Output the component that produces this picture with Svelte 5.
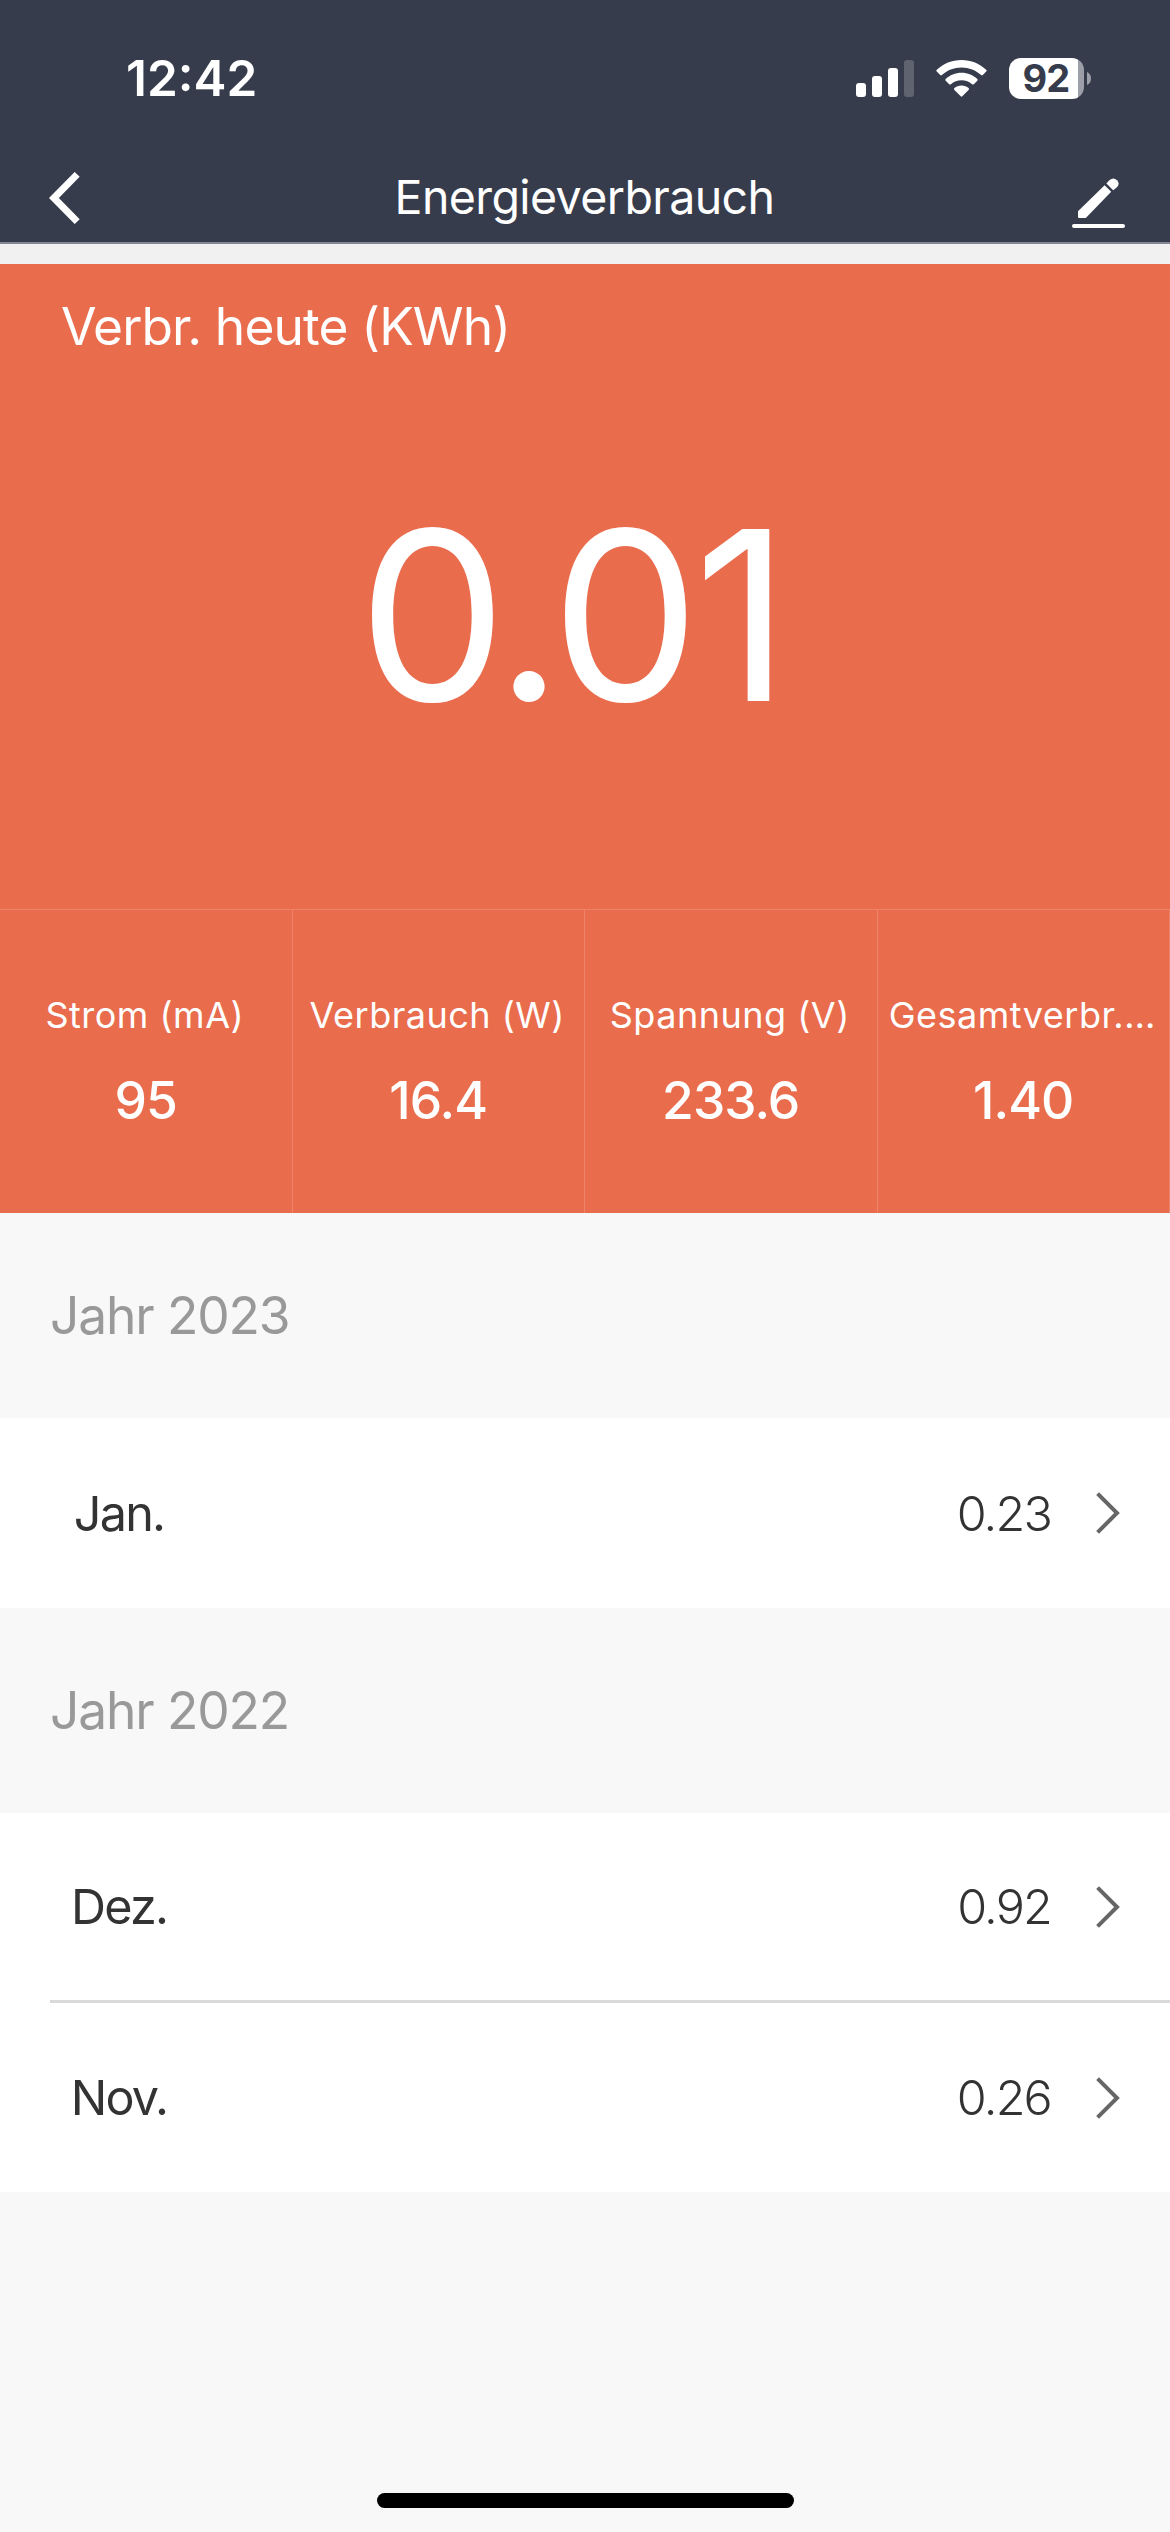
<script lang="ts">
	interface Stat {
		label: string;
		value: string;
	}

	interface Month {
		name: string;
		value: string;
	}

	interface Year {
		title: string;
		months: Month[];
	}

	const today = '0.01';

	const stats: Stat[] = [
		{ label: 'Strom (mA)', value: '95' },
		{ label: 'Verbrauch (W)', value: '16.4' },
		{ label: 'Spannung (V)', value: '233.6' },
		{ label: 'Gesamtverbr.…', value: '1.40' }
	];

	const years: Year[] = [
		{ title: 'Jahr 2023', months: [{ name: 'Jan.', value: '0.23' }] },
		{
			title: 'Jahr 2022',
			months: [
				{ name: 'Dez.', value: '0.92' },
				{ name: 'Nov.', value: '0.26' }
			]
		}
	];
</script>

<div class="screen">
	<header>
		<div class="status-bar">
			<span class="clock">12:42</span>
			<div class="status-icons">
				<svg class="signal" width="58" height="37" viewBox="0 0 58 37" fill="#fff">
					<rect x="0" y="23" width="10" height="14" rx="3" />
					<rect x="16" y="16" width="10" height="21" rx="3" />
					<rect x="32" y="8" width="10" height="29" rx="3" />
					<rect x="48" y="0" width="10" height="37" rx="3" opacity="0.2" />
				</svg>
				<svg class="wifi" width="51" height="37" viewBox="0 0 51 37" fill="#fff">
					<path d="M25.5 0C35 0 43.8 3.7 50.2 9.8Q51.1 10.7 50.2 11.6L46.8 15Q46 15.8 45.1 15C40 10.2 33 7.4 25.5 7.4S11 10.2 5.9 15Q5 15.8 4.2 15L.8 11.6Q-.1 10.7 .8 9.8C7.2 3.7 16 0 25.5 0Z" />
					<path d="M25.5 12.8C31.7 12.8 37.2 15.2 41.3 19Q42.2 19.9 41.3 20.8L37.8 24.2Q37 25 36.1 24.2C33.3 21.7 29.6 20.2 25.5 20.2S17.7 21.7 14.9 24.2Q14 25 13.2 24.2L9.7 20.8Q8.8 19.9 9.7 19C13.8 15.2 19.3 12.8 25.5 12.8Z" />
					<path d="M25.5 25.6C28.3 25.6 30.7 26.5 32.6 28.1Q33.5 29 32.6 29.9L26.3 36.3Q25.5 37 24.7 36.3L18.4 29.9Q17.5 29 18.4 28.1C20.3 26.5 22.7 25.6 25.5 25.6Z" />
				</svg>
				<div class="battery">
					<span class="battery-body">92</span>
					<svg width="4" height="13" viewBox="0 0 4 13">
						<path d="M0 0C2.5 1 4 3.5 4 6.5S2.5 12 0 13Z" fill="#9c9fa7" />
					</svg>
				</div>
			</div>
		</div>
		<nav>
			<button type="button" class="icon-button" aria-label="Zurück">
				<svg width="31" height="52" viewBox="0 0 31 52" fill="none" stroke="#fff" stroke-width="7">
					<path d="M28.2 2.4L4.9 26L28.2 49.6" />
				</svg>
			</button>
			<h1>Energieverbrauch</h1>
			<button type="button" class="icon-button edit" aria-label="Bearbeiten">
				<svg width="53" height="51" viewBox="0 0 53 51" fill="#fff">
					<path d="M6 33.2L32.6 7.2L39.2 13.8L13.8 40H7Q6 40 6 39Z" />
					<path d="M34.4 5.4L37.6 2Q41.6 -1.2 45 2.2Q48.2 5.8 45.2 9L41.2 12.2Z" />
					<rect x="0" y="46" width="53" height="4" rx="2" />
				</svg>
			</button>
		</nav>
	</header>

	<section class="overview">
		<h2>Verbr. heute (KWh)</h2>
		<div class="today">{today}</div>
		<div class="stats">
			{#each stats as stat}
				<div class="stat">
					<span class="stat-label">{stat.label}</span>
					<span class="stat-value">{stat.value}</span>
				</div>
			{/each}
		</div>
	</section>

	<main>
		{#each years as year}
			<h3>{year.title}</h3>
			<ul>
				{#each year.months as month}
					<li>
						<span class="month">{month.name}</span>
						<span class="amount">{month.value}</span>
						<svg width="24" height="42" viewBox="0 0 24 42" fill="none" stroke="#666" stroke-width="4">
							<path d="M1.6 1.6L21 21L1.6 40.4" />
						</svg>
					</li>
				{/each}
			</ul>
		{/each}
	</main>

	<div class="home-indicator"></div>
</div>

<style>
	:global(body) {
		margin: 0;
		background: #f8f8f8;
	}

	.screen {
		display: flex;
		flex-direction: column;
		width: 1170px;
		height: 2532px;
		overflow: hidden;
		background: #f8f8f8;
		color: #333;
		font-family: Inter, 'Liberation Sans', sans-serif;
	}

	h1,
	h2,
	h3,
	ul {
		margin: 0;
		padding: 0;
		font-weight: 400;
		list-style: none;
	}

	header {
		background: #363c4c;
		border-bottom: 2px solid #858693;
		color: #fff;
	}

	.status-bar {
		display: flex;
		align-items: center;
		justify-content: space-between;
		height: 156px;
		padding: 0 79px 0 126px;
		box-sizing: border-box;
	}

	.clock {
		font-size: 49.5px;
		font-weight: 600;
	}

	.status-icons,
	.battery {
		display: flex;
		align-items: center;
	}

	.wifi {
		margin: 0 22px;
	}

	.battery {
		gap: 3px;
	}

	.battery-body {
		width: 75px;
		height: 41px;
		padding-right: 1px;
		box-sizing: border-box;
		border-radius: 12px;
		background: linear-gradient(90deg, #fff 69px, #9c9fa7 69px);
		color: #363c4c;
		font-size: 38px;
		font-weight: 700;
		letter-spacing: -0.8px;
		line-height: 41px;
		text-align: center;
	}

	nav {
		display: flex;
		align-items: center;
		justify-content: space-between;
		height: 82px;
		padding: 0 45px 4px 49px;
	}

	.icon-button {
		display: flex;
		width: 53px;
		padding: 2px 0 0;
		border: none;
		background: transparent;
	}

	.edit {
		padding-top: 12px;
	}

	h1 {
		margin-right: 5px;
		font-size: 46.5px;
		letter-spacing: -0.6px;
	}

	.overview {
		display: flex;
		flex-direction: column;
		height: 949px;
		border-top: 20px solid #f1f1f2;
		background: #e96c4d;
		color: #fff;
	}

	h2 {
		padding: 32px 61px 0;
		font-size: 51.5px;
		letter-spacing: -0.9px;
		line-height: 61px;
	}

	.today {
		display: flex;
		flex: 1;
		align-items: center;
		justify-content: center;
		padding: 0 28px 37px 0;
		font-size: 236px;
		letter-spacing: -6px;
		line-height: 1;
	}

	.stats {
		display: grid;
		grid-template-columns: repeat(4, 1fr);
		height: 303px;
		border-top: 1px solid #ed8469;
	}

	.stat {
		display: flex;
		flex-direction: column;
		align-items: center;
		gap: 30px;
		padding-top: 80px;
		border-right: 1px solid #ed8469;
		white-space: nowrap;
	}

	.stat-label {
		margin-right: 2px;
		font-size: 36px;
		letter-spacing: 0.5px;
		line-height: 50px;
	}

	.stat-value {
		font-size: 51.5px;
		font-weight: 500;
		letter-spacing: -0.9px;
		line-height: 60px;
	}

	h3 {
		padding-left: 50px;
		color: #999;
		font-size: 51.5px;
		letter-spacing: -1.15px;
		line-height: 205px;
	}

	ul {
		background: #fff;
	}

	li {
		display: flex;
		align-items: center;
		height: 190px;
		margin-left: 50px;
		padding-right: 50px;
	}

	li:not(:last-child) {
		height: 187px;
		border-bottom: 3px solid #d9d9d9;
	}

	li:not(:first-child) {
		height: 189px;
	}

	.month {
		width: 138px;
		font-size: 48.5px;
		letter-spacing: -1.8px;
		text-align: center;
	}

	.amount {
		margin: 0 45px 0 auto;
		font-size: 48.5px;
		font-weight: 300;
		letter-spacing: -1.8px;
	}

	.home-indicator {
		width: 417px;
		height: 15px;
		margin: auto auto 24px;
		border-radius: 8px;
		background: #000;
	}
</style>
